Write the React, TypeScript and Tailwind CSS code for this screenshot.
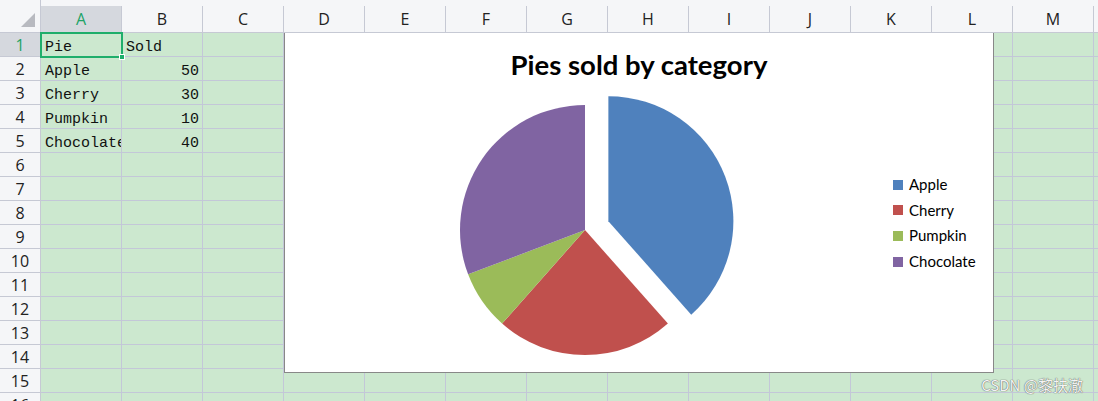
import React from "react";

const COLS = ["A", "B", "C", "D", "E", "F", "G", "H", "I", "J", "K", "L", "M", "N"];
const ROWS = Array.from({ length: 16 }, (_, i) => i + 1);

const data: Record<string, { text: string; right?: boolean }> = {
    "A1": { text: "Pie" },
    "B1": { text: "Sold" },
    "A2": { text: "Apple" },
    "B2": { text: "50", right: true },
    "A3": { text: "Cherry" },
    "B3": { text: "30", right: true },
    "A4": { text: "Pumpkin" },
    "B4": { text: "10", right: true },
    "A5": { text: "Chocolate" },
    "B5": { text: "40", right: true },
};

const slices = [
    { name: "Apple", value: 50, color: "#4f81bd", explode: 25 },
    { name: "Cherry", value: 30, color: "#c0504d", explode: 0 },
    { name: "Pumpkin", value: 10, color: "#9bbb59", explode: 0 },
    { name: "Chocolate", value: 40, color: "#8064a2", explode: 0 },
];

function piePaths(cx: number, cy: number, r: number) {
    const total = slices.reduce((s, x) => s + x.value, 0);
    let start = 0;
    return slices.map((s) => {
        const sweep = (s.value / total) * 360;
        const end = start + sweep;
        const mid = ((start + end) / 2) * (Math.PI / 180);
        const ox = cx + Math.sin(mid) * s.explode;
        const oy = cy - Math.cos(mid) * s.explode;
        const a0 = start * (Math.PI / 180);
        const a1 = end * (Math.PI / 180);
        const x0 = ox + r * Math.sin(a0);
        const y0 = oy - r * Math.cos(a0);
        const x1 = ox + r * Math.sin(a1);
        const y1 = oy - r * Math.cos(a1);
        const large = sweep > 180 ? 1 : 0;
        start = end;
        return {
            ...s,
            d: `M${ox},${oy} L${x0},${y0} A${r},${r} 0 ${large} 1 ${x1},${y1} Z`,
        };
    });
}

export default function App() {
    const paths = piePaths(585, 230, 125);

    return (
        <div className="relative w-[1098px] h-[401px] overflow-hidden bg-[#f5f6f8] font-['Open_Sans',sans-serif]">
            {/* Sheet grid */}
            <div className="grid grid-cols-[41px_repeat(14,81px)] grid-rows-[33px_repeat(16,24px)]">
                {/* corner */}
                <div className="relative border-r border-b border-[#c6c9d4] bg-[#f5f6f8]">
                    <svg className="absolute left-[21px] top-[13px]" width="14" height="14" viewBox="0 0 14 14">
                        <polygon points="14,0 14,14 0,14" fill="#b8bac0" />
                    </svg>
                </div>
                {COLS.map((c) => (
                    <div key={c} className="pt-[6px] border-b border-[#c6c9d4]">
                        <div
                            className={`h-full border-r border-[#c6c9d4] text-center text-[16px] leading-[20px] pt-[3px] ${
                                c === "A" ? "bg-[#d5d8de] text-[#21a366]" : "text-[#222]"
                            }`}
                        >
                            {c}
                        </div>
                    </div>
                ))}

                {ROWS.map((r) => (
                    <React.Fragment key={r}>
                        <div
                            className={`border-r border-b border-[#c6c9d4] text-center text-[16px] leading-[21px] pt-[2px] ${
                                r === 1 ? "bg-[#d5d8de] text-[#21a366]" : "bg-[#f5f6f8] text-[#222]"
                            }`}
                        >
                            {r}
                        </div>
                        {COLS.map((c) => {
                            const cell = data[`${c}${r}`];
                            const selected = c === "A" && r === 1;
                            return (
                                <div
                                    key={c}
                                    className={`relative bg-[#cce8cf] border-r border-b border-[#c3c7d8] font-['Liberation_Mono',monospace] text-[15px] leading-[20px] pt-[5px] text-[#111] whitespace-nowrap ${
                                        cell?.right ? "text-right pr-[3px]" : "pl-[4px]"
                                    } ${selected ? "z-10" : "overflow-hidden"}`}
                                >
                                    {cell?.text}
                                    {selected && (
                                        <div className="absolute -left-px -top-px w-[83px] h-[26px] border-2 border-[#1fae6b]">
                                            <div className="absolute -right-[4px] -bottom-[4px] w-[6px] h-[6px] bg-[#1fae6b] border border-white" />
                                        </div>
                                    )}
                                </div>
                            );
                        })}
                    </React.Fragment>
                ))}
            </div>

            {/* Chart */}
            <div className="absolute left-[284px] top-[33px] w-[710px] h-[340px] bg-white border-x border-b border-[#888888] flex flex-col z-20">
                <div className="pt-[18px] text-center font-['Lato',sans-serif] font-bold text-[27.5px] leading-[27px] text-black">
                    Pies sold by category
                </div>
                <div className="flex flex-1">
                    <svg width="608" height="294" viewBox="285 78 608 294" className="shrink-0">
                        {paths.map((p) => (
                            <path key={p.name} d={p.d} fill={p.color} />
                        ))}
                    </svg>
                    <div className="mt-[94px] flex flex-col font-['Lato',sans-serif] text-[15px] leading-[25.6px] text-black">
                        {slices.map((s) => (
                            <div key={s.name} className="flex items-center gap-[6px]">
                                <span className="w-[10px] h-[10px]" style={{ backgroundColor: s.color }} />
                                <span>{s.name}</span>
                            </div>
                        ))}
                    </div>
                </div>
            </div>

            {/* Watermark */}
            <div className="absolute right-[15px] bottom-[7px] z-30 font-['Noto_Sans_CJK_SC',sans-serif] text-[15px] leading-[18px] text-[#f4f4f4] [text-shadow:0_0_1px_#555,0_0_1px_#777]">
                CSDN @黎扶澈
            </div>
        </div>
    );
}
